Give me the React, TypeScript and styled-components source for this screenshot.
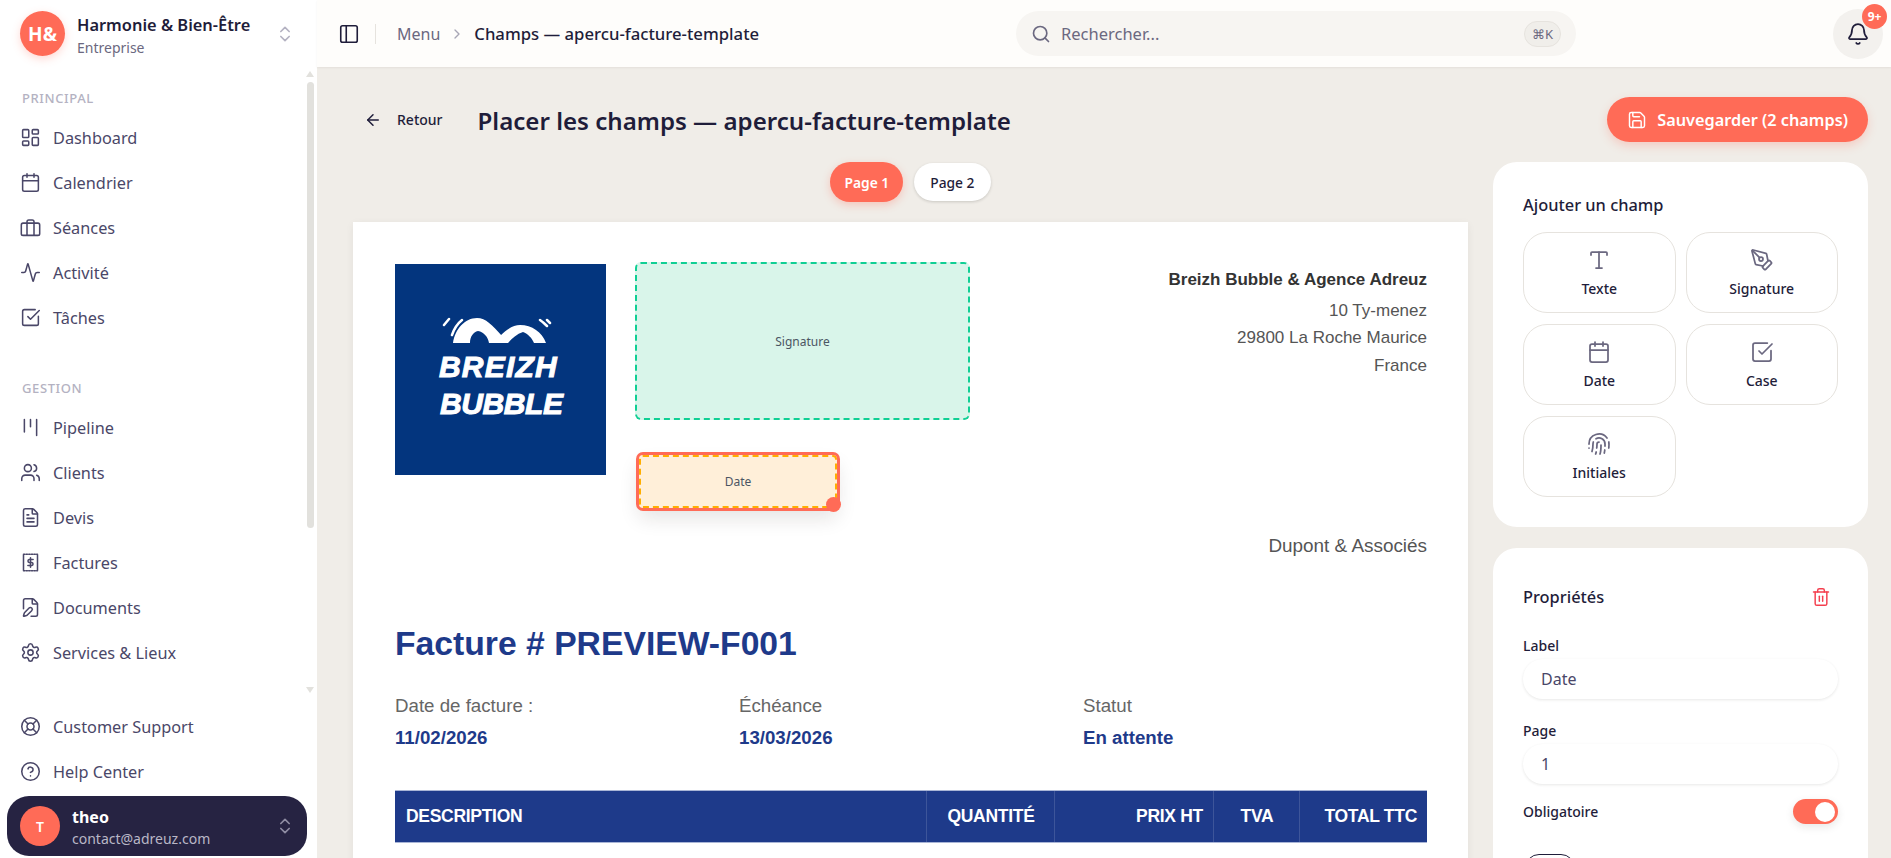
import styled, { createGlobalStyle } from 'styled-components';
import {
  Activity,
  ArrowLeft,
  Bell,
  Calendar,
  ChevronRight,
  ChevronsUpDown,
  CircleHelp,
  FilePen,
  FileText,
  Fingerprint,
  Kanban,
  LayoutDashboard,
  LifeBuoy,
  PanelLeft,
  PenTool,
  Save,
  Search,
  Settings,
  SquareCheckBig,
  Trash2,
  Type,
  Users,
} from 'lucide-react';

const CORAL = '#ff6b57';
const INK = '#1f1d3a';
const NAV_TEXT = '#4a4768';
const MUTED = '#6b6880';
const LINE = '#e6e3de';
const PAGE_BG = '#f0ede8';
const RAIL = '#e2e1dd';
const UI_FONT = '"Noto Sans", "Open Sans", sans-serif';
const DOC_FONT = '"Liberation Sans", Arial, sans-serif';
const INVOICE_BLUE = '#1e3a8a';

const GlobalStyle = createGlobalStyle`
  html, body {
    margin: 0;
    height: 100%;
    overflow: hidden;
    background: ${PAGE_BG};
    font-family: ${UI_FONT};
    color: ${INK};
  }
  * {
    box-sizing: border-box;
  }
`;

const Shell = styled.div`
  display: flex;
  width: 100vw;
  height: 100vh;
  overflow: hidden;
`;

const Sidebar = styled.aside`
  display: flex;
  flex-direction: column;
  flex: 0 0 317px;
  height: 100%;
  background: #ffffff;
`;

const Brand = styled.div`
  display: flex;
  align-items: center;
  flex: 0 0 67px;
  padding: 0 22px 0 20px;
`;

const BrandAvatar = styled.div`
  display: flex;
  align-items: center;
  justify-content: center;
  width: 45px;
  height: 45px;
  border-radius: 50%;
  background: ${CORAL};
  box-shadow: 0 3px 8px rgba(255, 107, 87, 0.25);
  color: #fff;
  font-size: 19px;
  font-weight: 700;
`;

const BrandText = styled.div`
  display: flex;
  flex-direction: column;
  flex: 1;
  margin-left: 12px;
  padding-top: 3px;
`;

const BrandName = styled.span`
  font-size: 16.4px;
  font-weight: 600;
  line-height: 22px;
  color: ${INK};
`;

const BrandSub = styled.span`
  margin-top: 3px;
  font-size: 14px;
  line-height: 18px;
  color: ${MUTED};
`;

const NavFrame = styled.div`
  position: relative;
  flex: 0 0 633px;
  overflow: hidden;
`;

const NavList = styled.nav`
  padding: 20px 0 0 20px;
`;

const ScrollRail = styled.div`
  position: absolute;
  top: 4px;
  right: 3px;
  bottom: 7px;
  display: flex;
  flex-direction: column;
  align-items: center;
  width: 8px;
`;

const RailArrow = styled.span<{ $down?: boolean }>`
  width: 0;
  height: 0;
  margin-top: ${(p) => (p.$down ? 'auto' : '0')};
  border-left: 4px solid transparent;
  border-right: 4px solid transparent;
  border-bottom: ${(p) => (p.$down ? '0' : `6px solid ${RAIL}`)};
  border-top: ${(p) => (p.$down ? `6px solid ${RAIL}` : '0')};
`;

const RailThumb = styled.span`
  width: 7px;
  height: 446px;
  margin-top: 5px;
  border-radius: 4px;
  background: ${RAIL};
`;

const SectionLabel = styled.div<{ $gap?: number }>`
  margin: ${(p) => p.$gap ?? 0}px 0 6px 2px;
  height: 22px;
  line-height: 22px;
  font-size: 13px;
  font-weight: 500;
  letter-spacing: 0.6px;
  color: #b4b2c2;
`;

const NavItem = styled.a`
  display: flex;
  align-items: center;
  gap: 12px;
  height: 45px;
  font-size: 16.3px;
  color: ${NAV_TEXT};

  svg {
    flex: 0 0 21px;
  }
`;

const SideBottom = styled.div`
  padding: 4px 0 0 20px;
`;

const UserPill = styled.div`
  display: flex;
  align-items: center;
  margin: 2px 0 0 7px;
  width: 300px;
  height: 60px;
  padding: 0 12px 0 13px;
  border-radius: 22px;
  background: #262342;
`;

const UserAvatar = styled.div`
  display: flex;
  align-items: center;
  justify-content: center;
  width: 40px;
  height: 40px;
  border-radius: 50%;
  background: ${CORAL};
  color: #fff;
  font-size: 14px;
  font-weight: 600;
`;

const UserText = styled.div`
  display: flex;
  flex-direction: column;
  flex: 1;
  margin-left: 12px;
  padding-top: 3px;
`;

const UserName = styled.span`
  font-size: 16px;
  font-weight: 700;
  line-height: 21px;
  color: #fff;
`;

const UserMail = styled.span`
  font-size: 14px;
  line-height: 21px;
  color: #b9b7c6;
`;

const Main = styled.main`
  display: flex;
  flex-direction: column;
  flex: 1;
  min-width: 0;
  height: 100%;
`;

const TopBar = styled.header`
  display: flex;
  align-items: center;
  flex: 0 0 67px;
  padding: 0 8px 0 21px;
  background: #fefdfb;
  box-shadow: 0 1px 2px rgba(30, 25, 20, 0.06);
`;

const Crumbs = styled.div`
  display: flex;
  align-items: center;
  width: 678px;
  font-size: 16px;
`;

const Divider = styled.span`
  width: 1px;
  height: 20px;
  margin: 0 21px 0 15px;
  background: ${LINE};
`;

const CrumbMuted = styled.span`
  color: ${MUTED};
`;

const CrumbCurrent = styled.span`
  font-size: 16.7px;
  font-weight: 500;
  color: ${INK};
`;

const CrumbSep = styled.span`
  display: flex;
  margin: 0 9px;
  color: #a8a6b5;
`;

const SearchBox = styled.div`
  display: flex;
  align-items: center;
  gap: 10px;
  width: 560px;
  height: 45px;
  padding: 0 15px;
  border-radius: 23px;
  background: #f7f5f2;
  font-size: 16.5px;
  color: ${MUTED};
`;

const SearchText = styled.span`
  flex: 1;
`;

const Kbd = styled.span`
  display: flex;
  align-items: center;
  justify-content: center;
  width: 37px;
  height: 26px;
  border: 1px solid ${LINE};
  border-radius: 13px;
  background: #f0eeea;
  font-size: 13px;
  color: ${MUTED};
`;

const BellButton = styled.div`
  position: relative;
  display: flex;
  align-items: center;
  justify-content: center;
  width: 50px;
  height: 50px;
  margin-left: auto;
  border-radius: 50%;
  background: #f3f1ee;
  color: ${INK};
`;

const BellBadge = styled.span`
  position: absolute;
  top: -5px;
  right: -4px;
  display: flex;
  align-items: center;
  justify-content: center;
  width: 25px;
  height: 25px;
  border-radius: 50%;
  background: ${CORAL};
  color: #fff;
  font-size: 12px;
  font-weight: 700;
`;

const Content = styled.div`
  display: flex;
  flex-direction: column;
  flex: 1;
  min-height: 0;
  padding: 30px 23px 0 36px;
  overflow: hidden;
`;

const PageHeader = styled.div`
  display: flex;
  align-items: center;
  height: 45px;
`;

const BackLink = styled.a`
  display: flex;
  align-items: center;
  gap: 15px;
  margin: 0 35px 0 11px;
  font-size: 14px;
  font-weight: 500;
  color: ${INK};
`;

const PageTitle = styled.h1`
  flex: 1;
  margin: 2px 0 0;
  font-size: 24.1px;
  font-weight: 600;
  color: ${INK};
`;

const SaveButton = styled.button`
  display: flex;
  align-items: center;
  gap: 10px;
  height: 45px;
  padding: 0 20px;
  border: 0;
  border-radius: 23px;
  background: ${CORAL};
  box-shadow: 0 4px 10px rgba(255, 107, 87, 0.25);
  color: #fff;
  font-family: inherit;
  font-size: 16.3px;
  font-weight: 600;
`;

const Columns = styled.div`
  display: grid;
  grid-template-columns: 1115px 375px;
  gap: 25px;
  margin-top: 20px;
  min-height: 0;
`;

const PreviewColumn = styled.div`
  display: flex;
  flex-direction: column;
  min-width: 0;
`;

const PageTabs = styled.div`
  display: flex;
  align-items: center;
  justify-content: center;
  gap: 11px;
  height: 40px;
  margin-bottom: 20px;
`;

const PageTab = styled.button<{ $active?: boolean }>`
  height: ${(p) => (p.$active ? 40 : 38)}px;
  padding: 0 ${(p) => (p.$active ? 14 : 16)}px;
  border: 0;
  border-radius: 20px;
  background: ${(p) => (p.$active ? CORAL : '#fff')};
  box-shadow: ${(p) => (p.$active ? '0 3px 8px rgba(255, 107, 87, 0.3)' : '0 1px 3px rgba(30, 25, 20, 0.18)')};
  color: ${(p) => (p.$active ? '#fff' : INK)};
  font-family: inherit;
  font-size: 13.8px;
  font-weight: ${(p) => (p.$active ? 600 : 500)};
`;

const InvoiceSheet = styled.section`
  position: relative;
  padding: 42px 41px 200px 42px;
  background: #fff;
  box-shadow: 0 2px 8px rgba(30, 25, 20, 0.06);
  font-family: ${DOC_FONT};
`;

const SheetTop = styled.div`
  display: flex;
  justify-content: space-between;
  height: 240px;
`;

const LogoBox = styled.div`
  display: flex;
  flex-direction: column;
  width: 211px;
  height: 211px;
  padding: 53px 0 0 44px;
  background: #03357e;

  svg {
    flex: 0 0 27px;
    margin: 0 0 4px 3px;
  }
`;

const LogoWord = styled.div<{ $indent?: number; $tracking: number }>`
  margin-left: ${(p) => p.$indent ?? 0}px;
  height: 37px;
  line-height: 37px;
  font-family: ${DOC_FONT};
  font-size: 30px;
  font-style: italic;
  font-weight: 700;
  letter-spacing: ${(p) => p.$tracking}px;
  color: #fff;
  -webkit-text-stroke: 1px #fff;
`;

const Sender = styled.div`
  display: flex;
  flex-direction: column;
  align-items: flex-end;
  padding-top: 2px;
  font-size: 17px;
  line-height: 27.7px;
  color: #555;
`;

const SenderName = styled.strong`
  margin-bottom: 3px;
  color: #333;
`;

const Recipient = styled.div`
  height: 64px;
  padding-top: 30px;
  text-align: right;
  font-size: 18.9px;
  line-height: 24px;
  color: #555;
`;

const InvoiceTitle = styled.h2`
  margin: 55px 0 0;
  font-size: 33.7px;
  line-height: 40px;
  font-weight: 700;
  color: ${INVOICE_BLUE};
`;

const MetaGrid = styled.div`
  display: grid;
  grid-template-columns: repeat(3, 344px);
  margin-top: 32px;
`;

const MetaLabel = styled.div`
  font-size: 18.7px;
  line-height: 22px;
  color: #666;
`;

const MetaValue = styled.div`
  margin-top: 10px;
  font-size: 18.7px;
  line-height: 22px;
  font-weight: 700;
  color: ${INVOICE_BLUE};
`;

const TableHead = styled.div`
  display: grid;
  grid-template-columns: 532px 128px 159px 86px 127px;
  height: 53px;
  margin-top: 41px;
  border-top: 1px solid #a9b5d6;
  border-bottom: 1px solid #a9b5d6;
  background: #1e3a8a;
`;

const HeadCell = styled.div<{ $align: string }>`
  display: flex;
  align-items: center;
  justify-content: ${(p) => p.$align};
  padding: 0 10px 0 11px;
  border-right: 1px solid rgba(255, 255, 255, 0.14);
  font-size: 17.5px;
  font-weight: 700;
  letter-spacing: -0.3px;
  color: #fff;

  &:last-child {
    border-right: 0;
  }
`;

const SignatureField = styled.div`
  position: absolute;
  left: 282px;
  top: 40px;
  display: flex;
  align-items: center;
  justify-content: center;
  width: 335px;
  height: 158px;
  border: 2px dashed #10cf94;
  border-radius: 6px;
  background: #d9f5ea;
  font-family: ${UI_FONT};
  font-size: 12px;
  color: #4b5563;
`;

const DateField = styled.div`
  position: absolute;
  left: 286px;
  top: 233px;
  display: flex;
  align-items: center;
  justify-content: center;
  width: 198px;
  height: 53px;
  border: 2px dashed #ffae00;
  border-radius: 4px;
  outline: 3px solid ${CORAL};
  outline-offset: 0;
  background: #ffefd9;
  box-shadow: 0 10px 20px rgba(30, 25, 20, 0.12);
  font-family: ${UI_FONT};
  font-size: 12px;
  color: #4b5563;
`;

const ResizeHandle = styled.span`
  position: absolute;
  right: -6px;
  bottom: -6px;
  width: 15px;
  height: 15px;
  border-radius: 50%;
  background: ${CORAL};
`;

const RightColumn = styled.div`
  display: flex;
  flex-direction: column;
  gap: 21px;
`;

const Card = styled.section`
  padding: 30px;
  border-radius: 24px;
  background: #fff;
`;

const CardTitle = styled.h3`
  margin: 0;
  font-size: 16.4px;
  line-height: 26px;
  font-weight: 500;
  color: ${INK};
`;

const FieldGrid = styled.div`
  display: grid;
  grid-template-columns: 1fr 1fr;
  gap: 11px 10px;
  margin-top: 14px;
`;

const FieldButton = styled.button`
  display: flex;
  flex-direction: column;
  align-items: center;
  justify-content: center;
  gap: 7px;
  height: 81px;
  padding: 0;
  border: 1px solid ${LINE};
  border-radius: 24px;
  background: #fff;
  color: ${INK};
  font-family: inherit;
  font-size: 14px;
  font-weight: 500;

  svg {
    color: ${MUTED};
  }
`;

const CardHead = styled.div`
  display: flex;
  align-items: center;
  justify-content: space-between;
  height: 38px;
  padding-right: 7px;
  color: #f43f4e;
`;

const PropLabel = styled.div<{ $gap: number }>`
  margin-top: ${(p) => p.$gap}px;
  font-size: 14px;
  line-height: 20px;
  font-weight: 500;
  color: ${INK};
`;

const PropInput = styled.div`
  display: flex;
  align-items: center;
  height: 40px;
  margin-top: 3px;
  padding: 0 18px;
  border-radius: 20px;
  background: #fff;
  box-shadow: 0 1px 3px rgba(30, 25, 20, 0.1);
  font-size: 16px;
  color: ${NAV_TEXT};
`;

const ToggleRow = styled.div`
  display: flex;
  align-items: center;
  justify-content: space-between;
  height: 25px;
  margin-top: 15px;
  font-size: 14px;
  font-weight: 500;
`;

const Toggle = styled.span`
  display: flex;
  align-items: center;
  justify-content: flex-end;
  width: 45px;
  height: 25px;
  padding-right: 3px;
  border-radius: 13px;
  background: ${CORAL};
  box-shadow: 0 3px 8px rgba(30, 25, 20, 0.1);
`;

const ToggleKnob = styled.span`
  width: 20px;
  height: 20px;
  border-radius: 50%;
  background: #fff;
`;

const OutlineButton = styled.button`
  display: block;
  width: 50px;
  height: 40px;
  margin: 30px 0 0 2px;
  border: 1px solid ${INK};
  border-radius: 14px;
  background: #fff;
`;

function SessionsIcon() {
  return (
    <svg width='21' height='21' viewBox='0 0 24 24' fill='none' stroke='currentColor' strokeWidth='1.75' strokeLinejoin='round'>
      <rect x='1.500' y='7' width='21' height='14' rx='2' />
      <path d='M8 21V5.500A2 2 0 0 1 10 3.500h4a2 2 0 0 1 2 2V21' />
    </svg>
  );
}

function ReceiptIcon() {
  return (
    <svg width='21' height='21' viewBox='0 0 24 24' fill='none' stroke='currentColor' strokeWidth='1.75' strokeLinecap='round'>
      <path d='M4 3.500V20.500M20 3.500V20.500' />
      <path d='M4 2.500H20M4 21.500H20' strokeDasharray='1.500 1.500' />
      <path d='M15 8.500H10.500a1.800 1.800 0 0 0 0 3.500h3a1.800 1.800 0 0 1 0 3.500H9M12 6.500v11' />
    </svg>
  );
}

function BrandMark() {
  return (
    <svg width='110' height='27' viewBox='0 0 110 27' fill='none'>
      <path
        fill='#fff'
        d='M11 26C13 12 23 1 35 1c9 0 15 7 25 18l6 7H47c-1-6-5-11-11-12-5 1-8 6-8 12zM58 19c8-8 14-11 20-11 12 0 22 7 26 18H92c-2-5-6-9-11-11-6 2-11 6-15 11h-6z'
      />
      <path stroke='#fff' strokeWidth='2.500' strokeLinecap='round' d='M10 18C12 12 15 7 20 3M2 8 7 2M105 9C103 7 101 5 98 3M108 6 105 3' />
    </svg>
  );
}

const mainNav = [
  { label: 'Dashboard', icon: <LayoutDashboard size={21} strokeWidth={1.75} /> },
  { label: 'Calendrier', icon: <Calendar size={21} strokeWidth={1.75} /> },
  { label: 'Séances', icon: <SessionsIcon /> },
  { label: 'Activité', icon: <Activity size={21} strokeWidth={1.75} /> },
  { label: 'Tâches', icon: <SquareCheckBig size={21} strokeWidth={1.75} /> },
];

const manageNav = [
  { label: 'Pipeline', icon: <Kanban size={21} strokeWidth={1.75} /> },
  { label: 'Clients', icon: <Users size={21} strokeWidth={1.75} /> },
  { label: 'Devis', icon: <FileText size={21} strokeWidth={1.75} /> },
  { label: 'Factures', icon: <ReceiptIcon /> },
  { label: 'Documents', icon: <FilePen size={21} strokeWidth={1.75} /> },
  { label: 'Services & Lieux', icon: <Settings size={21} strokeWidth={1.75} /> },
];

const fieldTypes = [
  { label: 'Texte', icon: <Type size={24} strokeWidth={1.75} /> },
  { label: 'Signature', icon: <PenTool size={24} strokeWidth={1.75} /> },
  { label: 'Date', icon: <Calendar size={24} strokeWidth={1.75} /> },
  { label: 'Case', icon: <SquareCheckBig size={24} strokeWidth={1.75} /> },
  { label: 'Initiales', icon: <Fingerprint size={24} strokeWidth={1.75} /> },
];

const columns = [
  { label: 'DESCRIPTION', align: 'flex-start' },
  { label: 'QUANTITÉ', align: 'center' },
  { label: 'PRIX HT', align: 'flex-end' },
  { label: 'TVA', align: 'center' },
  { label: 'TOTAL TTC', align: 'flex-end' },
];

export default function App() {
  return (
    <Shell>
      <GlobalStyle />
      <Sidebar>
        <Brand>
          <BrandAvatar>H&amp;</BrandAvatar>
          <BrandText>
            <BrandName>Harmonie &amp; Bien-Être</BrandName>
            <BrandSub>Entreprise</BrandSub>
          </BrandText>
          <ChevronsUpDown size={20} color='#b4b2c2' />
        </Brand>
        <NavFrame>
          <NavList>
            <SectionLabel>PRINCIPAL</SectionLabel>
            {mainNav.map((item) => (
              <NavItem key={item.label}>
                {item.icon}
                {item.label}
              </NavItem>
            ))}
            <SectionLabel $gap={37}>GESTION</SectionLabel>
            {manageNav.map((item) => (
              <NavItem key={item.label}>
                {item.icon}
                {item.label}
              </NavItem>
            ))}
          </NavList>
          <ScrollRail>
            <RailArrow />
            <RailThumb />
            <RailArrow $down />
          </ScrollRail>
        </NavFrame>
        <SideBottom>
          <NavItem>
            <LifeBuoy size={21} strokeWidth={1.75} />
            Customer Support
          </NavItem>
          <NavItem>
            <CircleHelp size={21} strokeWidth={1.75} />
            Help Center
          </NavItem>
        </SideBottom>
        <UserPill>
          <UserAvatar>T</UserAvatar>
          <UserText>
            <UserName>theo</UserName>
            <UserMail>contact@adreuz.com</UserMail>
          </UserText>
          <ChevronsUpDown size={20} color='#8f8da3' />
        </UserPill>
      </Sidebar>
      <Main>
        <TopBar>
          <Crumbs>
            <PanelLeft size={22} strokeWidth={1.75} color={INK} />
            <Divider />
            <CrumbMuted>Menu</CrumbMuted>
            <CrumbSep>
              <ChevronRight size={16} />
            </CrumbSep>
            <CrumbCurrent>Champs — apercu-facture-template</CrumbCurrent>
          </Crumbs>
          <SearchBox>
            <Search size={20} />
            <SearchText>Rechercher...</SearchText>
            <Kbd>⌘K</Kbd>
          </SearchBox>
          <BellButton>
            <Bell size={24} strokeWidth={1.75} />
            <BellBadge>9+</BellBadge>
          </BellButton>
        </TopBar>
        <Content>
          <PageHeader>
            <BackLink>
              <ArrowLeft size={18} />
              Retour
            </BackLink>
            <PageTitle>Placer les champs — apercu-facture-template</PageTitle>
            <SaveButton>
              <Save size={20} strokeWidth={1.75} />
              Sauvegarder (2 champs)
            </SaveButton>
          </PageHeader>
          <Columns>
            <PreviewColumn>
              <PageTabs>
                <PageTab $active>Page 1</PageTab>
                <PageTab>Page 2</PageTab>
              </PageTabs>
              <InvoiceSheet>
                <SheetTop>
                  <LogoBox>
                    <BrandMark />
                    <LogoWord $tracking={1.2}>BREIZH</LogoWord>
                    <LogoWord $indent={1} $tracking={-0.4}>
                      BUBBLE
                    </LogoWord>
                  </LogoBox>
                  <Sender>
                    <SenderName>Breizh Bubble &amp; Agence Adreuz</SenderName>
                    <span>10 Ty-menez</span>
                    <span>29800 La Roche Maurice</span>
                    <span>France</span>
                  </Sender>
                </SheetTop>
                <Recipient>Dupont &amp; Associés</Recipient>
                <InvoiceTitle>Facture # PREVIEW-F001</InvoiceTitle>
                <MetaGrid>
                  <div>
                    <MetaLabel>Date de facture :</MetaLabel>
                    <MetaValue>11/02/2026</MetaValue>
                  </div>
                  <div>
                    <MetaLabel>Échéance</MetaLabel>
                    <MetaValue>13/03/2026</MetaValue>
                  </div>
                  <div>
                    <MetaLabel>Statut</MetaLabel>
                    <MetaValue>En attente</MetaValue>
                  </div>
                </MetaGrid>
                <TableHead>
                  {columns.map((col) => (
                    <HeadCell key={col.label} $align={col.align}>
                      {col.label}
                    </HeadCell>
                  ))}
                </TableHead>
                <SignatureField>Signature</SignatureField>
                <DateField>
                  Date
                  <ResizeHandle />
                </DateField>
              </InvoiceSheet>
            </PreviewColumn>
            <RightColumn>
              <Card>
                <CardTitle>Ajouter un champ</CardTitle>
                <FieldGrid>
                  {fieldTypes.map((field) => (
                    <FieldButton key={field.label}>
                      {field.icon}
                      {field.label}
                    </FieldButton>
                  ))}
                </FieldGrid>
              </Card>
              <Card>
                <CardHead>
                  <CardTitle>Propriétés</CardTitle>
                  <Trash2 size={20} strokeWidth={1.75} />
                </CardHead>
                <PropLabel $gap={20}>Label</PropLabel>
                <PropInput>Date</PropInput>
                <PropLabel $gap={22}>Page</PropLabel>
                <PropInput>1</PropInput>
                <ToggleRow>
                  Obligatoire
                  <Toggle>
                    <ToggleKnob />
                  </Toggle>
                </ToggleRow>
                <OutlineButton />
              </Card>
            </RightColumn>
          </Columns>
        </Content>
      </Main>
    </Shell>
  );
}
